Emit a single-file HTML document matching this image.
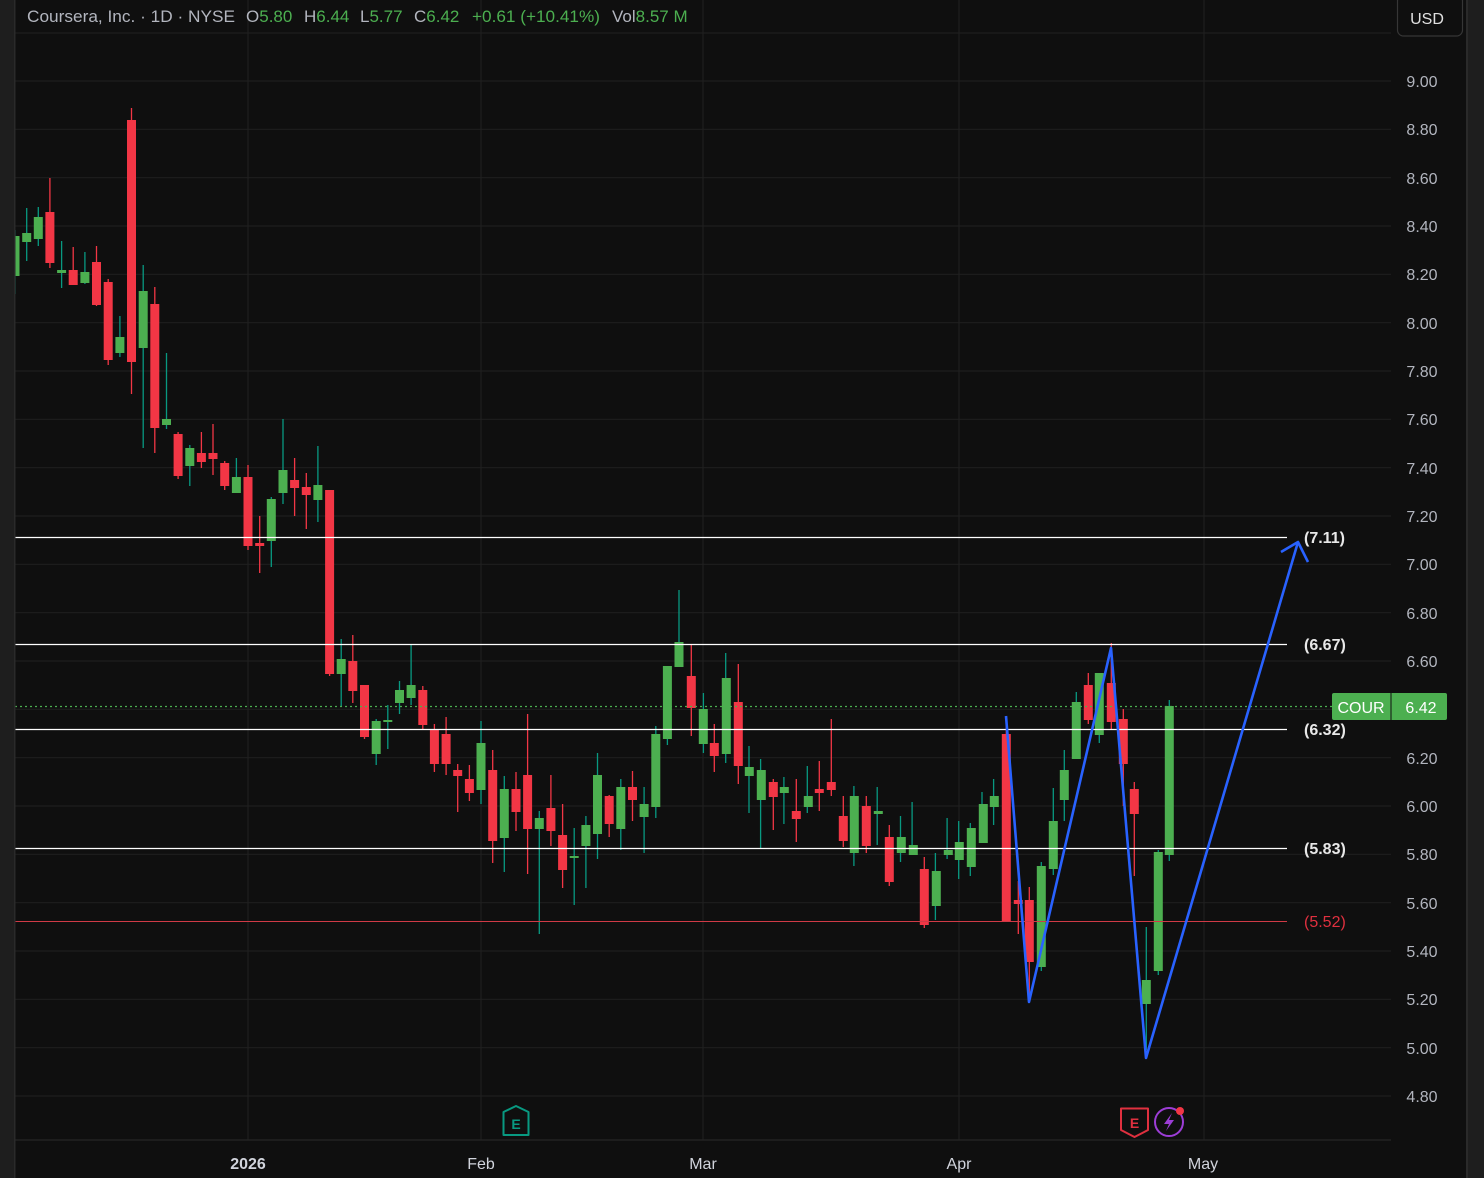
<!DOCTYPE html>
<html><head><meta charset="utf-8"><style>
html,body{margin:0;padding:0;background:#0f0f0f;}
body{width:1484px;height:1178px;overflow:hidden;position:relative;font-family:"Liberation Sans",sans-serif;}
svg{position:absolute;left:0;top:0;}
</style></head><body>
<svg width="1484" height="1178" viewBox="0 0 1484 1178" xmlns="http://www.w3.org/2000/svg" font-family="Liberation Sans, sans-serif">
<rect x="0" y="0" width="1484" height="1178" fill="#0f0f0f"/>
<g stroke="#1f1f1f" stroke-width="1.2">
<line x1="15" x2="1391" y1="33" y2="33"/><line x1="15" x2="1391" y1="81" y2="81"/><line x1="15" x2="1391" y1="129.3" y2="129.3"/><line x1="15" x2="1391" y1="177.7" y2="177.7"/><line x1="15" x2="1391" y1="226" y2="226"/><line x1="15" x2="1391" y1="274.3" y2="274.3"/><line x1="15" x2="1391" y1="322.7" y2="322.7"/><line x1="15" x2="1391" y1="371" y2="371"/><line x1="15" x2="1391" y1="419.3" y2="419.3"/><line x1="15" x2="1391" y1="467.7" y2="467.7"/><line x1="15" x2="1391" y1="516" y2="516"/><line x1="15" x2="1391" y1="564.3" y2="564.3"/><line x1="15" x2="1391" y1="612.7" y2="612.7"/><line x1="15" x2="1391" y1="661" y2="661"/><line x1="15" x2="1391" y1="709.3" y2="709.3"/><line x1="15" x2="1391" y1="757.7" y2="757.7"/><line x1="15" x2="1391" y1="806" y2="806"/><line x1="15" x2="1391" y1="854.3" y2="854.3"/><line x1="15" x2="1391" y1="902.7" y2="902.7"/><line x1="15" x2="1391" y1="951" y2="951"/><line x1="15" x2="1391" y1="999.3" y2="999.3"/><line x1="15" x2="1391" y1="1047.7" y2="1047.7"/><line x1="15" x2="1391" y1="1096" y2="1096"/>
<line x1="248" x2="248" y1="0" y2="1140"/><line x1="481" x2="481" y1="0" y2="1140"/><line x1="703" x2="703" y1="0" y2="1140"/><line x1="959" x2="959" y1="0" y2="1140"/><line x1="1204" x2="1204" y1="0" y2="1140"/>
<line x1="15" x2="1391" y1="1140" y2="1140" stroke="#262626"/>
</g>
<!-- candles -->
<g stroke-width="1.3">
<g stroke="#089981">
<path d="M15 230V294M26.7 208V261M38.3 207V246M61.6 241V288M84.9 252V284M119.9 316V357M143.2 265V448M166.5 353V429M189.8 445V486M236.4 458V493M271.3 497V567M283 419V504M317.9 446V522M341.2 639V707M376.2 719V765M387.8 705V749M399.5 681V714M411.1 645V705M481 721V804M504.3 776V872M539.3 811V934M574.2 828V905M585.9 816V888M597.5 753V859M620.8 779V850M644.1 787V853M655.8 726V818M667.4 666V745M679 590V667M703.4 693V753M725.7 653V763M749 746V813M760.6 759V848M783.9 777V824M807.3 766V813M853.9 786V866M877.2 787V845M900.5 816V862M912.1 802V855M935.4 853V920M947.1 818V859M958.7 821V879M970.3 823V876M982 792V843M993.6 779V825M1041.3 862V971M1053.3 788V875M1064.3 750V821M1076.3 692V759M1099.3 673V743M1146.3 927V1050M1158.3 850V975M1169.3 700V861"/>
</g>
<g stroke="#f23645">
<path d="M49.9 178V268M73.2 247V285M96.5 246V306M108.2 279V365M131.5 108V394M154.8 287V453M178.1 432V479M201.4 432V468M213 424V475M224.7 461V490M248 465V550M259.7 516V573M294.6 458V516M306.3 473V529M329.6 490V676M352.8 635V703M364.5 685V739M422.8 686V729M434.4 724V772M446.1 717V775M457.7 764V812M469.4 765V801M492.7 750V863M516 772V831M527.6 714V874M550.9 775V846M562.6 804V888M609.2 795V837M632.5 771V821M691.3 644V736M714.3 724V772M738.3 664V784M773.3 779V830M796.3 779V842M819.3 761V811M831.3 719V796M843.3 796V847M866.3 796V853M889.3 825V886M924.3 857V928M1006.3 720V922M1018.3 881V934M1029.3 887V1000M1088.3 673V724M1111.3 643V729M1123.3 709V806M1134.3 782V876"/>
</g>
</g>
<g fill="#4caf50">
<rect x="10.5" y="236" width="9" height="40"/><rect x="22.2" y="233" width="9" height="9"/><rect x="33.8" y="217" width="9" height="22"/><rect x="57.1" y="270" width="9" height="3"/><rect x="80.4" y="272" width="9" height="11"/><rect x="115.4" y="337" width="9" height="16"/><rect x="138.7" y="291" width="9" height="57"/><rect x="162" y="419" width="9" height="6"/><rect x="185.3" y="448" width="9" height="18"/><rect x="231.9" y="477" width="9" height="16"/><rect x="266.8" y="499" width="9" height="42"/><rect x="278.5" y="470" width="9" height="23"/><rect x="313.4" y="485" width="9" height="15"/><rect x="336.7" y="659" width="9" height="15"/><rect x="371.7" y="721" width="9" height="33"/><rect x="383.3" y="720" width="9" height="2"/><rect x="395" y="690" width="9" height="13"/><rect x="406.6" y="685" width="9" height="13"/><rect x="476.5" y="743" width="9" height="47"/><rect x="499.8" y="789" width="9" height="49"/><rect x="534.8" y="818" width="9" height="11"/><rect x="569.7" y="856" width="9" height="2"/><rect x="581.4" y="825" width="9" height="21"/><rect x="593" y="775" width="9" height="59"/><rect x="616.3" y="787" width="9" height="42"/><rect x="639.6" y="804" width="9" height="13"/><rect x="651.3" y="734" width="9" height="73"/><rect x="662.9" y="666" width="9" height="73"/><rect x="674.5" y="642" width="9" height="25"/>
<rect x="698.8" y="709" width="9" height="35"/><rect x="721.8" y="678" width="9" height="76"/><rect x="744.8" y="767" width="9" height="9"/><rect x="756.8" y="770" width="9" height="30"/><rect x="779.8" y="787" width="9" height="6"/><rect x="803.8" y="796" width="9" height="11"/><rect x="849.8" y="796" width="9" height="57"/><rect x="873.8" y="811" width="9" height="3"/><rect x="896.8" y="837" width="9" height="16"/><rect x="908.8" y="845" width="9" height="10"/><rect x="931.8" y="871" width="9" height="35"/><rect x="943.8" y="850" width="9" height="5"/><rect x="954.8" y="842" width="9" height="18"/><rect x="966.8" y="828" width="9" height="39"/><rect x="978.8" y="804" width="9" height="39"/><rect x="989.8" y="796" width="9" height="11"/>
<rect x="1036.8" y="866" width="9" height="101"/><rect x="1048.8" y="821" width="9" height="48"/><rect x="1059.8" y="770" width="9" height="30"/><rect x="1071.8" y="702" width="9" height="57"/><rect x="1094.8" y="673" width="9" height="62"/><rect x="1141.8" y="980" width="9" height="24"/><rect x="1153.8" y="852" width="9" height="119"/><rect x="1164.8" y="706" width="9" height="149"/>
</g>
<g fill="#f23645">
<rect x="45.4" y="212" width="9" height="51"/><rect x="68.7" y="270" width="9" height="15"/><rect x="92" y="262" width="9" height="43"/><rect x="103.7" y="282" width="9" height="78"/><rect x="127" y="120" width="9" height="242"/><rect x="150.3" y="304" width="9" height="124"/><rect x="173.6" y="434" width="9" height="42"/><rect x="196.9" y="453" width="9" height="9"/><rect x="208.5" y="453" width="9" height="6"/><rect x="220.2" y="463" width="9" height="23"/><rect x="243.5" y="477" width="9" height="69"/><rect x="255.2" y="543" width="9" height="3"/><rect x="290.1" y="480" width="9" height="8"/><rect x="301.8" y="487" width="9" height="8"/><rect x="325.1" y="490" width="9" height="184"/><rect x="348.3" y="661" width="9" height="30"/><rect x="360" y="685" width="9" height="52"/><rect x="418.3" y="690" width="9" height="35"/><rect x="429.9" y="729" width="9" height="35"/><rect x="441.6" y="734" width="9" height="30"/><rect x="453.2" y="770" width="9" height="6"/><rect x="464.9" y="779" width="9" height="14"/><rect x="488.2" y="770" width="9" height="71"/><rect x="511.5" y="789" width="9" height="23"/><rect x="523.1" y="775" width="9" height="54"/><rect x="546.4" y="808" width="9" height="23"/><rect x="558.1" y="835" width="9" height="35"/><rect x="604.7" y="796" width="9" height="28"/><rect x="628" y="787" width="9" height="13"/>
<rect x="686.8" y="676" width="9" height="32"/><rect x="709.8" y="743" width="9" height="13"/><rect x="733.8" y="702" width="9" height="64"/><rect x="768.8" y="782" width="9" height="15"/><rect x="791.8" y="811" width="9" height="8"/><rect x="814.8" y="789" width="9" height="4"/><rect x="826.8" y="782" width="9" height="8"/><rect x="838.8" y="816" width="9" height="25"/><rect x="861.8" y="806" width="9" height="40"/><rect x="884.8" y="837" width="9" height="45"/><rect x="919.8" y="869" width="9" height="56"/>
<rect x="1001.8" y="734" width="9" height="188"/><rect x="1013.8" y="900" width="9" height="4"/><rect x="1024.8" y="900" width="9" height="62"/><rect x="1083.8" y="685" width="9" height="35"/><rect x="1106.8" y="683" width="9" height="39"/><rect x="1118.8" y="719" width="9" height="45"/><rect x="1129.8" y="789" width="9" height="25"/>
</g>
<!-- horizontal lines -->
<line x1="15" x2="1332" y1="706.5" y2="706.5" stroke="#4caf50" stroke-width="1.2" stroke-dasharray="2 3"/>
<g stroke="#ffffff" stroke-width="1.3">
<line x1="15" x2="1287" y1="537.5" y2="537.5"/><line x1="15" x2="1287" y1="644.5" y2="644.5"/><line x1="15" x2="1287" y1="729.5" y2="729.5"/><line x1="15" x2="1287" y1="848.5" y2="848.5"/>
</g>
<line x1="15" x2="1287" y1="921.5" y2="921.5" stroke="#d03a46" stroke-width="1"/>
<!-- blue zigzag -->
<polyline points="1006,716 1029,1002 1111,648 1146,1058 1298,542" fill="none" stroke="#2962ff" stroke-width="2.6" stroke-linejoin="round"/>
<polyline points="1281,552 1298,542 1308,562" fill="none" stroke="#2962ff" stroke-width="2.6" stroke-linejoin="round"/>
<!-- side strips on top -->
<rect x="0" y="0" width="14" height="1178" fill="#1e1e1e"/>
<rect x="14" y="0" width="1.5" height="1178" fill="#2a2a2a"/>
<rect x="1468" y="0" width="16" height="1178" fill="#1e1e1e"/>
<rect x="1466" y="0" width="2" height="1178" fill="#2a2a2a"/>
<!-- line labels -->
<g font-size="16" font-weight="bold" fill="#e8e8e8">
<text x="1304" y="543">(7.11)</text><text x="1304" y="650">(6.67)</text><text x="1304" y="735">(6.32)</text><text x="1304" y="854">(5.83)</text>
<text x="1304" y="927" fill="#e0303f" font-weight="normal">(5.52)</text>
</g>
<!-- price axis -->
<g font-size="16" fill="#b2b5be" text-anchor="middle">
<text x="1422" y="87">9.00</text><text x="1422" y="135">8.80</text><text x="1422" y="184">8.60</text><text x="1422" y="232">8.40</text><text x="1422" y="280">8.20</text><text x="1422" y="329">8.00</text><text x="1422" y="377">7.80</text><text x="1422" y="425">7.60</text><text x="1422" y="474">7.40</text><text x="1422" y="522">7.20</text><text x="1422" y="570">7.00</text><text x="1422" y="619">6.80</text><text x="1422" y="667">6.60</text><text x="1422" y="764">6.20</text><text x="1422" y="812">6.00</text><text x="1422" y="860">5.80</text><text x="1422" y="909">5.60</text><text x="1422" y="957">5.40</text><text x="1422" y="1005">5.20</text><text x="1422" y="1054">5.00</text><text x="1422" y="1102">4.80</text>
</g>
<rect x="1397.5" y="-5" width="65" height="41" rx="6" fill="#0f0f0f" stroke="#363636" stroke-width="1.2"/>
<text x="1427" y="24" font-size="16" fill="#e0e0e0" text-anchor="middle">USD</text>
<rect x="1332" y="693" width="115" height="27" rx="2" fill="#4caf50"/>
<line x1="1391" x2="1391" y1="693" y2="720" stroke="#0f0f0f" stroke-width="1"/>
<text x="1361" y="713" font-size="16" fill="#ffffff" text-anchor="middle">COUR</text>
<text x="1421" y="713" font-size="16" fill="#ffffff" text-anchor="middle">6.42</text>
<!-- time axis -->
<g font-size="16" fill="#d1d4dc" text-anchor="middle">
<text x="248" y="1169" font-weight="bold">2026</text><text x="481" y="1169">Feb</text><text x="703" y="1169">Mar</text><text x="959" y="1169">Apr</text><text x="1203" y="1169">May</text>
</g>
<!-- event icons -->
<path d="M503.5 1112 L516 1106 L528.5 1112 L528.5 1135 L503.5 1135 Z" fill="none" stroke="#089981" stroke-width="2" stroke-linejoin="round"/>
<text x="516" y="1129" font-size="14" fill="#089981" text-anchor="middle" font-weight="bold">E</text>
<path d="M1121 1108.5 L1148 1108.5 L1148 1130 L1134.5 1137 L1121 1130 Z" fill="none" stroke="#e0303f" stroke-width="2" stroke-linejoin="round"/>
<text x="1134.5" y="1128" font-size="14" fill="#e0303f" text-anchor="middle" font-weight="bold">E</text>
<circle cx="1169" cy="1122" r="14" fill="none" stroke="#9c3dd6" stroke-width="2"/>
<path d="M1172 1113 L1164 1124 L1169 1124 L1166 1131 L1174 1120 L1169 1120 Z" fill="#9c3dd6"/>
<circle cx="1180" cy="1111" r="4" fill="#f23645"/>
<!-- header -->
<g font-size="17" fill="#b2b5be">
<text x="27" y="22" textLength="208" lengthAdjust="spacingAndGlyphs">Coursera, Inc. · 1D · NYSE</text>
<text x="246" y="22">O<tspan fill="#4caf50">5.80</tspan></text>
<text x="304" y="22">H<tspan fill="#4caf50">6.44</tspan></text>
<text x="360" y="22">L<tspan fill="#4caf50">5.77</tspan></text>
<text x="414" y="22">C<tspan fill="#4caf50">6.42</tspan></text>
<text x="472" y="22" fill="#4caf50" textLength="128" lengthAdjust="spacingAndGlyphs">+0.61 (+10.41%)</text>
<text x="612" y="22">Vol<tspan fill="#4caf50">8.57 M</tspan></text>
</g>
</svg>
</body></html>
